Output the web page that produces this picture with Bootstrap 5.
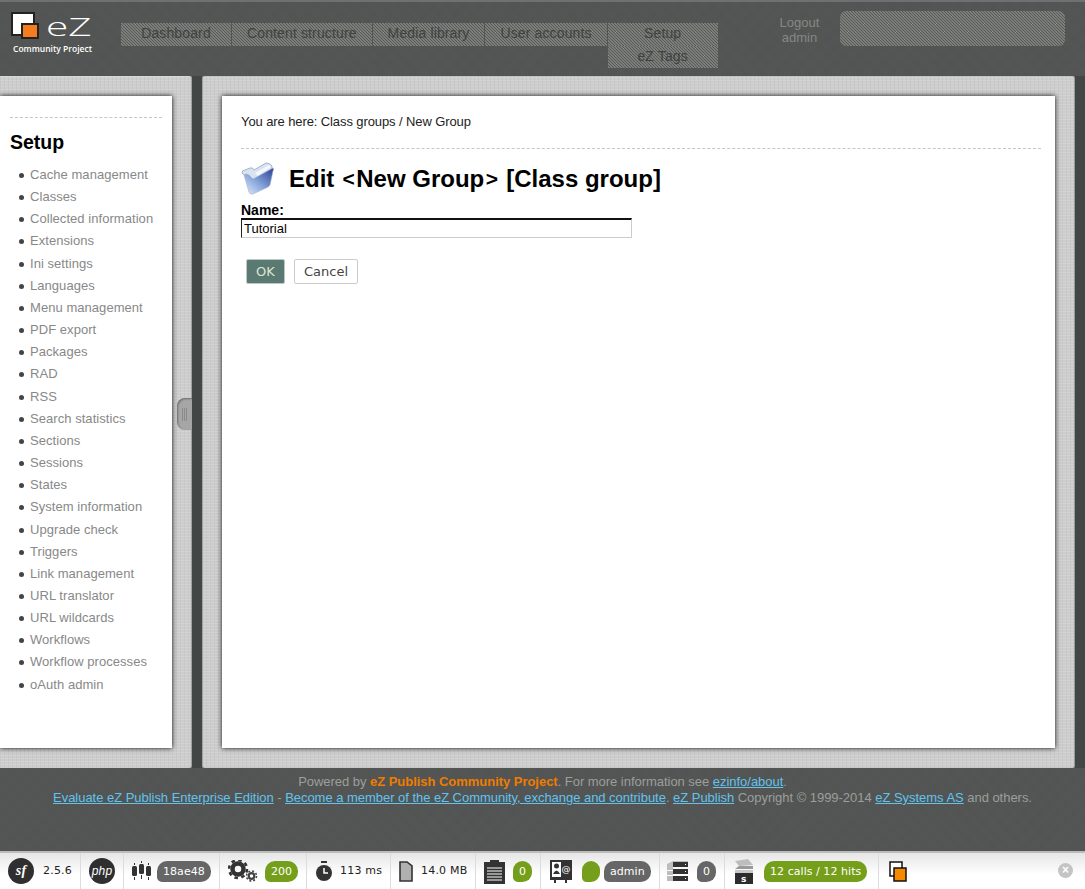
<!DOCTYPE html>
<html lang="en">
<head>
<meta charset="utf-8">
<title>Edit class group</title>
<link href="https://cdn.jsdelivr.net/npm/bootstrap@5.3.0/dist/css/bootstrap.min.css" rel="stylesheet">
<style>
html,body{height:889px;overflow:hidden}
body{font-family:"Liberation Sans",Arial,sans-serif;font-size:13px;color:#000;
 background-color:#525553;
 background-image:repeating-linear-gradient(45deg,rgba(255,255,255,.012) 0 1px,transparent 1px 2px),repeating-linear-gradient(-45deg,rgba(0,0,0,.02) 0 1px,transparent 1px 2px)}
.top-bar{height:76px;border-top:2px solid #6f7170;position:relative}
.logo-box{position:absolute;left:10px;top:10px;width:90px;height:46px}
.logo-name{position:absolute;left:36px;top:-1px;font-family:"Open Sans",sans-serif;font-weight:300;color:#fff;font-size:25px;line-height:30px;transform:scaleX(1.62);transform-origin:left top}
.logo-sub{position:absolute;left:3px;top:31px;font-family:"Open Sans",sans-serif;font-weight:600;font-size:8.5px;line-height:12px;color:#fff;white-space:nowrap}
.hatch{background-color:#585a58;background-image:linear-gradient(45deg,#7c7e7c 17%,#575957 17% 50%,#7c7e7c 50% 67%,#575957 67%);background-size:3px 3px}
.tabs{position:absolute;left:121px;top:21px}
.tab-item{height:22.5px;min-width:110px;padding:0 15px;line-height:21px;text-align:center;font-size:14px;letter-spacing:.13px;color:#3f4240;white-space:nowrap}
.tab-item+.tab-item{margin-left:1px}
.tab-col .tab-item{margin-left:0}
.tab-col{margin-left:1px}
.tab-col .tab-item+.tab-item{margin-top:0}
.user-links{position:absolute;left:767px;top:13px;width:65px;text-align:center;font-size:13px;line-height:15px;color:#858785}
.search-box{position:absolute;left:840px;top:9px;width:225px;height:35px;border-radius:6px}
.panels{height:692px;background:#424644}
.side-panel{width:192px;margin-right:10px;position:relative}
.main-panel{width:873px}
.linen{background-color:#cdcdcd;border-radius:0 2px 2px 0;padding:20px 20px 20px 0;
 background-image:repeating-linear-gradient(0deg,rgba(255,255,255,.12) 0 1px,transparent 1px 3px),repeating-linear-gradient(90deg,rgba(0,0,0,.035) 0 1px,transparent 1px 4px);
 box-shadow:inset -1px 0 1px rgba(0,0,0,.25),inset 0 1px 0 rgba(255,255,255,.3)}
.main-panel.linen{padding:20px;border-radius:2px;box-shadow:inset 1px 0 1px rgba(0,0,0,.2),inset -1px 0 1px rgba(0,0,0,.25)}
.sheet{background:#fff;height:100%;box-shadow:0 0 5px rgba(0,0,0,.95)}
.side-sheet{padding:21px 10px 0 10px}
.dash-line{border-top:1px dashed #c6c6c6;height:0}
.side-title{font-size:19.5px;font-weight:700;line-height:24px;margin:12px 0 10px}
.side-list{list-style:none;margin:0;padding:0}
.side-list li{height:22.16px;line-height:22px;padding-left:20px;position:relative;color:#888;font-size:13px;letter-spacing:.05px;white-space:nowrap}
.side-list li::before{content:"";position:absolute;left:9px;top:9px;width:5px;height:5px;border-radius:50%;background:#444}
.grip{position:absolute;left:177px;top:322px;width:15px;height:32px;border-radius:8px 0 0 8px;background:#a6a6a6;box-shadow:inset 1px 1px 2px rgba(0,0,0,.35);display:flex;gap:1px;align-items:center;justify-content:center}
.grip i{display:block;width:1px;height:13px;background:#8a8a8a}
.main-sheet{padding:18px 14px 0 19px}
.crumb{font-size:13px;line-height:16px;color:#222;letter-spacing:-.1px}
.crumb-line{margin-top:18px}
.page-head{display:flex;align-items:center;margin-top:13px;height:33px}
.page-head svg{margin-right:15px;flex:none}
.page-head h1{font-size:24px;font-weight:700;line-height:35px;margin:0;white-space:nowrap}
.angle{font-size:21px;margin:0 1.5px;vertical-align:1px}
.field-label{display:block;font-size:14px;font-weight:700;line-height:16px;margin:7px 0 0}
.field-input{display:block;width:391px;height:20px;padding:0 2px;font-size:13px;line-height:16px;color:#000;border-style:solid;border-width:2px 1px 1px 1px;border-color:#111 #ccc #ccc #222;border-radius:0;background:#fff}
.form-btns{margin:21px 0 0 5px;gap:9px}
.act-btn{font-family:"DejaVu Sans",sans-serif;font-size:13px;line-height:15px;height:25px;padding:4px 9px;border-radius:2px}
.act-ok{background:#5a7972;border:1px solid #bcc8c4;color:#dfe6cf;width:39px;padding:4px 0}
.act-cancel{background:#fff;border:1px solid #ccc;color:#444;width:64px;padding:4px 0}
.foot-area{height:83px;text-align:center;color:#9c9e9c;font-size:13px;line-height:16px;padding-top:6px;letter-spacing:-.033px}
.foot-area a{color:#62c3ee}
.foot-area a.brand-link{color:#f07c00;font-weight:700;text-decoration:none}
.dev-bar{height:38px;position:relative;border-top:2px solid #bcbcbc;background:linear-gradient(#e6e6e6,#fff 60%);font-family:"DejaVu Sans",sans-serif;font-size:11px;letter-spacing:.2px;color:#222;display:flex}
.dev-cell{height:36px;display:flex;align-items:center;border-right:1px solid #dcdcdc;flex:none;padding-left:8px}
.pill{height:21px;line-height:21px;border-radius:10px 10px 10px 5px;padding:0 6px;color:#fff;font-size:11px;letter-spacing:.05px;background:#666;white-space:nowrap}
.pill-green{background:#759e1a}
.blob{width:18px;padding:0;margin-right:4px}
.dev-close{position:absolute;left:1058px;top:10px;width:15px;height:15px;border-radius:50%;background:#c4c4c4;color:#fff;font:700 12px/15px "Liberation Sans",sans-serif;text-align:center}
.round-mark{width:26px;height:26px;border-radius:50%;background:#2f2f2f;color:#fff;text-align:center;line-height:26px;flex:none}
.sf-mark{font:italic 700 14px/26px "Liberation Serif",serif}
.php-mark{font:italic 400 12px/26px "Liberation Sans",sans-serif}
.pl-9{padding-left:9px}.pl-7{padding-left:7px}.pl-10{padding-left:10px}
.g-5{gap:5px}.g-7{gap:7px}.g-8{gap:8px}.g-9{gap:9px}.g-10{gap:10px}
.w80{width:81px}.w43{width:43px}.w96{width:96px}.w87{width:87px}.w84{width:84px}.w86{width:85px}.w65{width:65px}.w119{width:119px}.w153{width:154px}.w37{width:37px}
.user-pair{display:flex}
</style>
</head>
<body>
<header class="top-bar">
  <div class="logo-box">
    <svg width="30" height="30" viewBox="0 0 30 30" class="d-block"><rect x="2" y="1" width="22" height="22" fill="#fff" stroke="#222" stroke-width="2"/><rect x="12" y="12" width="16" height="14" fill="#f47b20" stroke="#222" stroke-width="2"/></svg>
    <span class="logo-name">eZ</span>
    <span class="logo-sub">Community Project</span>
  </div>
  <nav class="tabs d-flex align-items-start">
    <div class="tab-item hatch">Dashboard</div>
    <div class="tab-item hatch">Content structure</div>
    <div class="tab-item hatch">Media library</div>
    <div class="tab-item hatch">User accounts</div>
    <div class="tab-col d-flex flex-column">
      <div class="tab-item hatch">Setup</div>
      <div class="tab-item hatch">eZ Tags</div>
    </div>
  </nav>
  <div class="user-links">Logout<br>admin</div>
  <div class="search-box hatch"></div>
</header>

<main class="panels d-flex">
  <aside class="side-panel linen">
    <div class="sheet side-sheet">
      <div class="dash-line"></div>
      <h2 class="side-title">Setup</h2>
      <ul class="side-list">
        <li>Cache management</li><li>Classes</li><li>Collected information</li><li>Extensions</li><li>Ini settings</li><li>Languages</li><li>Menu management</li><li>PDF export</li><li>Packages</li><li>RAD</li><li>RSS</li><li>Search statistics</li><li>Sections</li><li>Sessions</li><li>States</li><li>System information</li><li>Upgrade check</li><li>Triggers</li><li>Link management</li><li>URL translator</li><li>URL wildcards</li><li>Workflows</li><li>Workflow processes</li><li>oAuth admin</li>
      </ul>
    </div>
    <div class="grip"><i></i><i></i><i></i></div>
  </aside>
  <section class="main-panel linen">
    <div class="sheet main-sheet">
      <div class="crumb">You are here: Class groups / New Group</div>
      <div class="dash-line crumb-line"></div>
      <div class="page-head">
        <svg width="33" height="33" viewBox="0 0 33 33">
          <defs><linearGradient id="fg" x1="0" y1="1" x2="1" y2="0"><stop offset="0" stop-color="#e4edf7"/><stop offset=".45" stop-color="#86a6dc"/><stop offset="1" stop-color="#2b3f94"/></linearGradient></defs>
          <path d="M1 11 Q1 8 4 8 L9 6 Q12 5 13 8 L25 1 Q29 1 31 4 L31 7 L12 20 Z" fill="#d8e3ef" stroke="#8fa6c0" stroke-width=".8"/>
          <path d="M14 11 L28 3 L30 5 L17 14 Z" fill="#f4f7fb"/>
          <path d="M3 13 Q5 11 8 13 L12 17 L32 6 Q33 7 32 9 L29 23 Q28 25 25 26 L12 32 Q9 33 8 30 Z" fill="url(#fg)" stroke="#9fb2cc" stroke-width=".6"/>
        </svg>
        <h1>Edit <span class="angle">&lt;</span>New Group<span class="angle">&gt;</span> [Class group]</h1>
      </div>
      <form>
        <label class="field-label" for="grp">Name:</label>
        <input class="field-input" id="grp" type="text" value="Tutorial">
        <div class="form-btns d-flex">
          <button type="button" class="btn act-btn act-ok">OK</button>
          <button type="button" class="btn act-btn act-cancel">Cancel</button>
        </div>
      </form>
    </div>
  </section>
</main>

<footer class="foot-area">
  <div>Powered by <a class="brand-link" href="#">eZ Publish Community Project</a>. For more information see <a href="#">ezinfo/about</a>.</div>
  <div><a href="#">Evaluate eZ Publish Enterprise Edition</a> - <a href="#">Become a member of the eZ Community, exchange and contribute</a>. <a href="#">eZ Publish</a> Copyright © 1999-2014 <a href="#">eZ Systems AS</a> and others.</div>
</footer>

<div class="dev-bar">
  <div class="dev-cell w80 g-9"><span class="round-mark sf-mark">sf</span><span>2.5.6</span></div>
  <div class="dev-cell w43"><span class="round-mark php-mark">php</span></div>
  <div class="dev-cell w96 g-5">
    <svg width="20" height="20" viewBox="0 0 20 20" fill="#333"><rect x="0" y="5" width="5" height="10" rx="1.500"/><rect x="2" y="2" width="1" height="2"/><rect x="2" y="16" width="1" height="3"/><rect x="7" y="3" width="5" height="10" rx="1.500"/><rect x="9" y="0" width="1" height="2"/><rect x="9" y="14" width="1" height="4"/><rect x="14" y="5" width="5" height="10" rx="1.500"/><rect x="16" y="2" width="1" height="2"/><rect x="16" y="16" width="1" height="3"/></svg>
    <span class="pill">18ae48</span>
  </div>
  <div class="dev-cell w87 g-7">
    <svg width="30" height="22" viewBox="0 0 30 22"><circle cx="10" cy="9" r="5.500" fill="none" stroke="#333" stroke-width="4.500"/><circle cx="10" cy="9" r="9" fill="none" stroke="#333" stroke-width="2.500" stroke-dasharray="3.500 3.570"/><circle cx="23.500" cy="16" r="2.800" fill="none" stroke="#444" stroke-width="2.200"/><circle cx="23.500" cy="16" r="5" fill="none" stroke="#444" stroke-width="1.500" stroke-dasharray="2 1.930"/></svg>
    <span class="pill pill-green">200</span>
  </div>
  <div class="dev-cell w84 g-7">
    <svg width="18" height="21" viewBox="0 0 18 21"><rect x="6" y="0" width="6" height="2" fill="#333"/><circle cx="9" cy="12" r="8" fill="#333"/><path d="M9 7v5h4" fill="none" stroke="#fff" stroke-width="1.500"/></svg>
    <span>113 ms</span>
  </div>
  <div class="dev-cell w86 g-8">
    <svg width="14" height="22" viewBox="0 0 14 22"><path d="M1 2h7l5 4v15H1z" fill="#b0b0b0" stroke="#333" stroke-width="1.600"/></svg>
    <span>14.0 MB</span>
  </div>
  <div class="dev-cell w65 g-8">
    <svg width="21" height="25" viewBox="0 0 21 25" fill="#333"><path d="M0 3h6V1h9v2h6v22H0z"/><path d="M3 9h15M3 12h15M3 15h15M3 18h15M3 21h15" stroke="#fff" stroke-width="1"/></svg>
    <span class="pill pill-green">0</span>
  </div>
  <div class="dev-cell w119 pl-9 g-10">
    <svg width="22" height="23" viewBox="0 0 22 23"><rect width="22" height="20" fill="#333"/><rect x="2" y="2" width="9" height="15" fill="#fff"/><circle cx="6.500" cy="6" r="2.500" fill="#333"/><path d="M3 14q3.500-7 7 0z" fill="#333"/><text x="11.500" y="12" font-size="9" fill="#fff" font-family="DejaVu Sans">@</text><rect x="4" y="20" width="2" height="3" fill="#333"/><rect x="15" y="20" width="2" height="3" fill="#333"/></svg>
    <span class="user-pair"><span class="pill pill-green blob"></span><span class="pill">admin</span></span>
  </div>
  <div class="dev-cell w65 pl-7 g-9">
    <svg width="21" height="20" viewBox="0 0 21 20"><path d="M0 3l6-3h15v5H6v4H0zM0 10h6v4H0zM0 15h6v5H0z" fill="#bdbdbd"/><rect x="6" y="1" width="15" height="5" fill="#333"/><rect x="6" y="8" width="15" height="5" fill="#333"/><rect x="6" y="15" width="15" height="5" fill="#333"/><rect x="18" y="3" width="1" height="1" fill="#fff"/><rect x="18" y="10" width="1" height="1" fill="#fff"/><rect x="18" y="17" width="1" height="1" fill="#fff"/></svg>
    <span class="pill">0</span>
  </div>
  <div class="dev-cell w153 pl-9 g-8">
    <svg width="22" height="26" viewBox="0 0 22 26"><path d="M1 3l13-2 5 6-14 1z" fill="#bdbdbd"/><path d="M1 11l4-3h14v3z" fill="#9a9a9a"/><rect x="1" y="12" width="18" height="5" fill="#c9c9c9"/><rect x="1" y="15" width="18" height="11" fill="#2c2c2c"/><text x="7" y="24" font-size="9" font-weight="700" fill="#fff" font-family="DejaVu Sans">s</text></svg>
    <span class="pill pill-green">12 calls / 12 hits</span>
  </div>
  <div class="dev-cell w37 pl-10 border-0">
    <svg width="18" height="21" viewBox="0 0 18 21"><rect x="1" y="1" width="12" height="14" fill="#fff" stroke="#111" stroke-width="1.500"/><rect x="5" y="7" width="12" height="13" fill="#f58a00" stroke="#111" stroke-width="1.500"/></svg>
  </div>
  <div class="dev-close">×</div>
</div>
</body>
</html>
